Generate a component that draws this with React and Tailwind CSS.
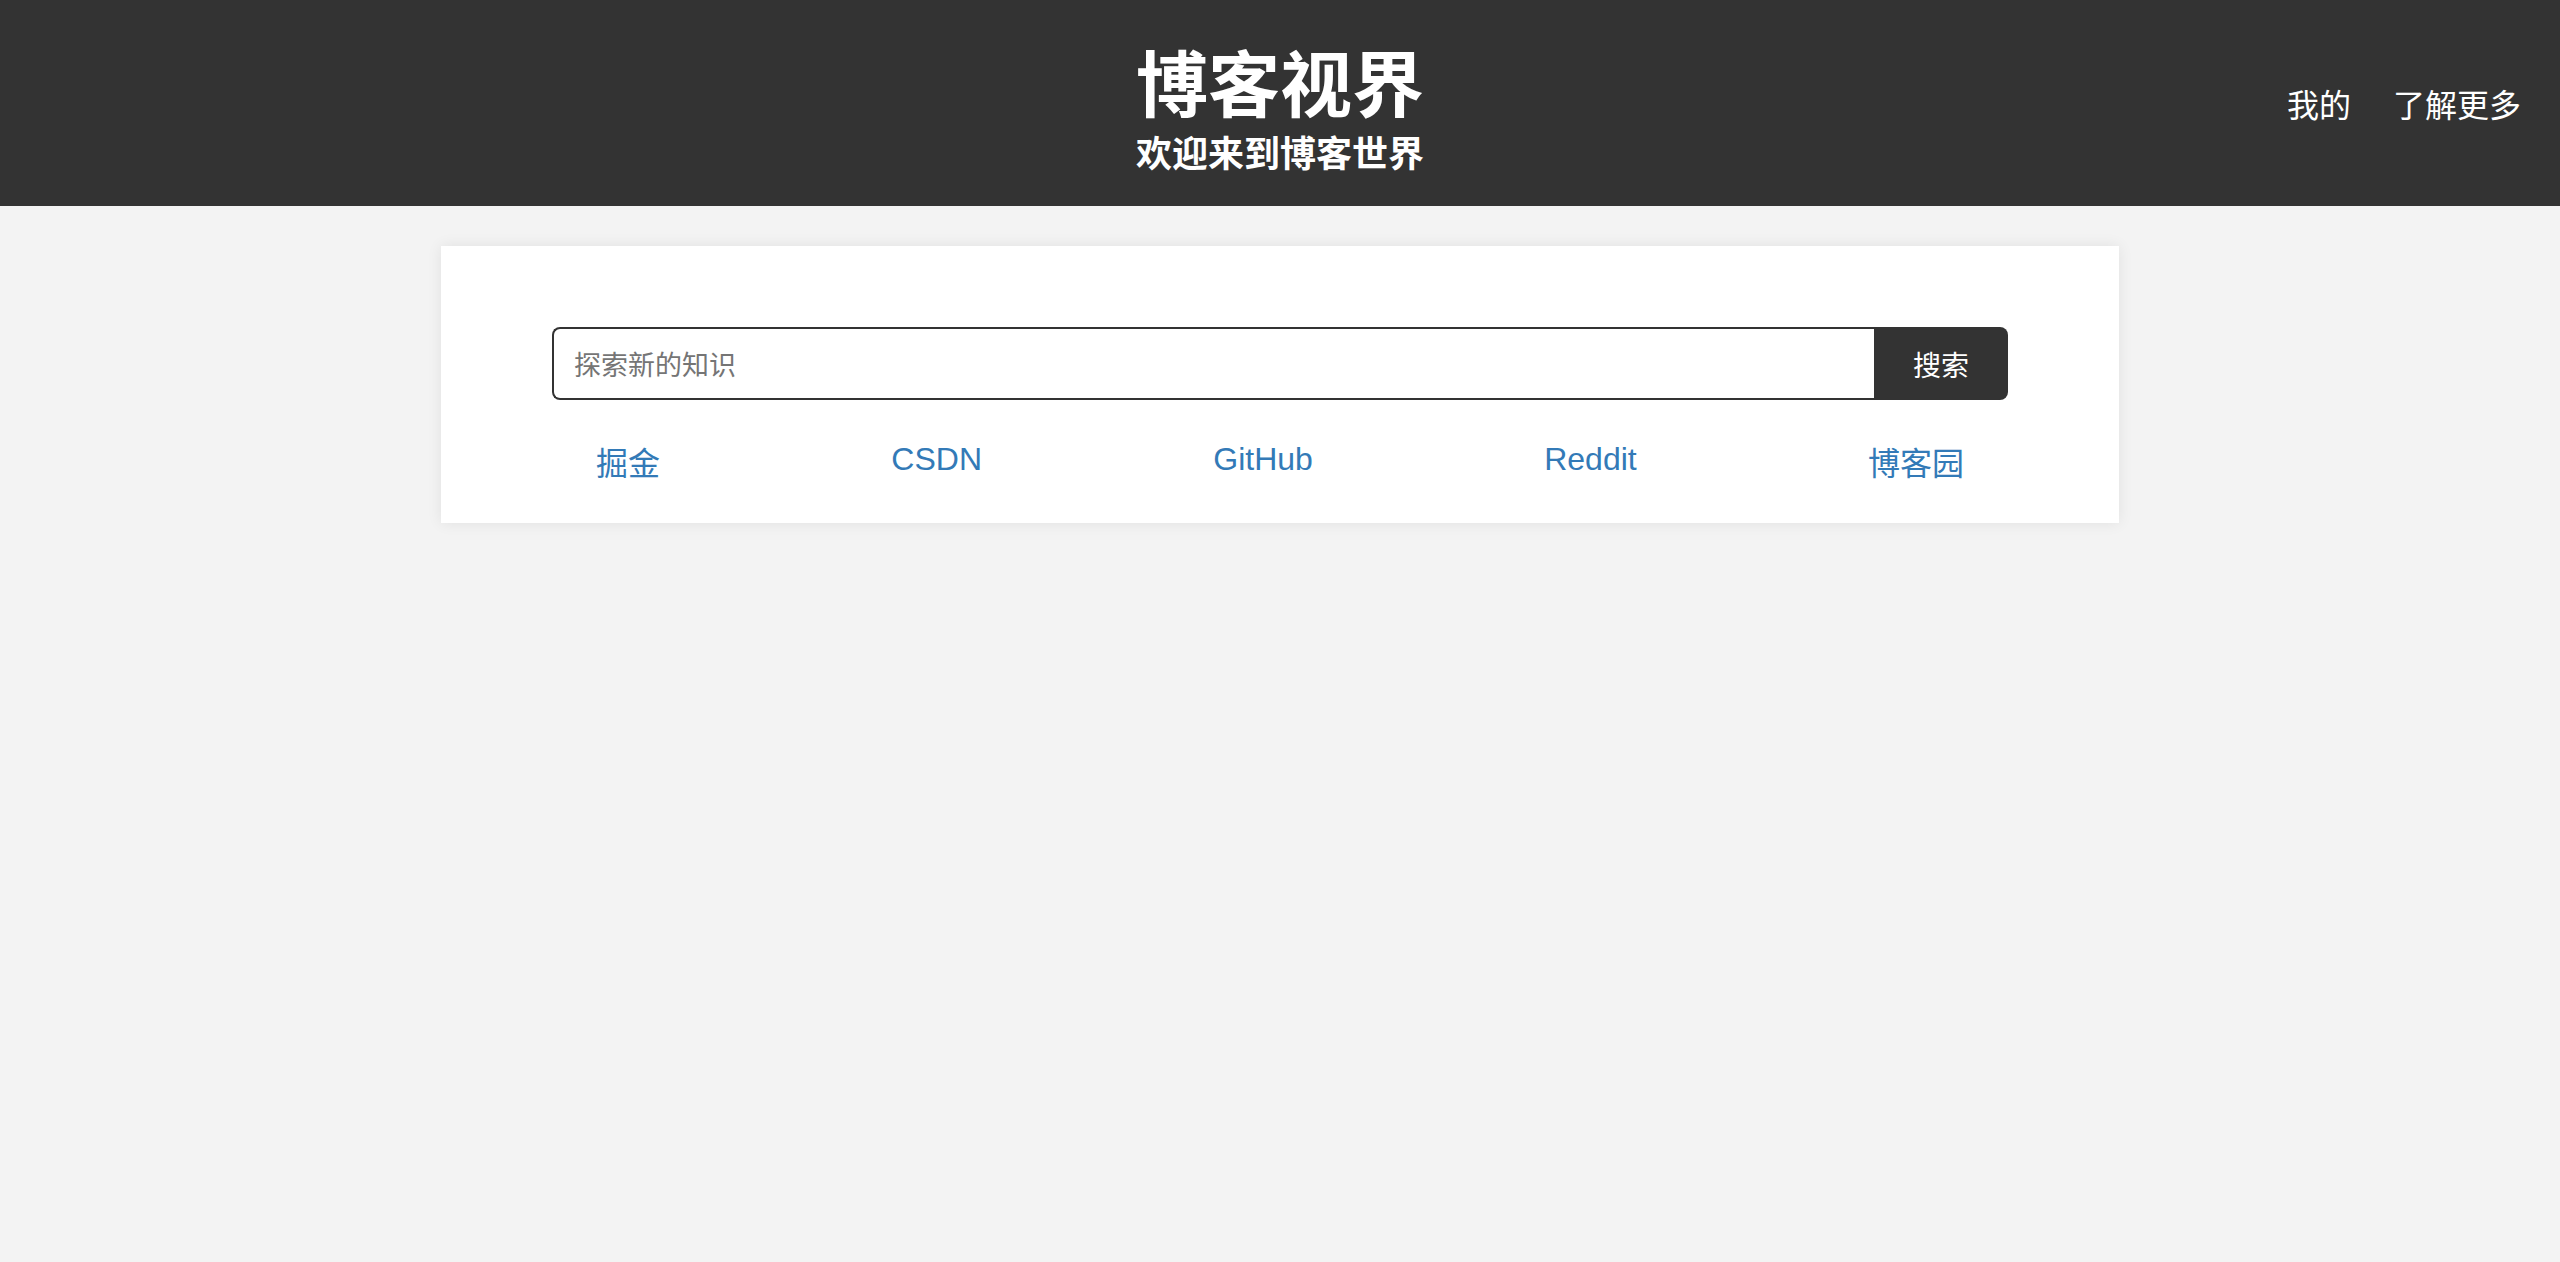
export default function App() {
  const links = [
    { t: "掘金", cjk: true },
    { t: "CSDN" },
    { t: "GitHub" },
    { t: "Reddit" },
    { t: "博客园", cjk: true },
  ];
  return (
    <div className="min-h-[1262px] bg-[#f3f3f3] font-['Liberation_Sans','Noto_Sans_CJK_SC',sans-serif]">
      <header className="h-[206px] bg-[#333333] grid grid-cols-[1fr_auto_1fr] items-center text-white">
        <div />
        <div className="self-start pt-[40px] flex flex-col items-center font-['Noto_Sans_CJK_SC',sans-serif]">
          <h1 className="text-[72px] leading-[80px] font-bold">博客视界</h1>
          <p className="mt-[11px] text-[36px] leading-[40px] font-bold">欢迎来到博客世界</p>
        </div>
        <nav className="flex justify-end gap-[42px] pr-[39px] text-[32px] font-['Noto_Sans_CJK_SC',sans-serif]">
          <a>我的</a>
          <a>了解更多</a>
        </nav>
      </header>
      <main className="pt-[40px]">
        <div className="mx-auto w-[1678px] bg-white shadow-[0_0_14px_rgba(0,0,0,0.08)] px-[111px] pt-[81px] pb-[39px]">
          <div className="flex h-[73px]">
            <input
              className="flex-1 h-full border-2 border-[#333333] border-r-0 rounded-l-[8px] px-[20px] text-[27px] text-[#333] placeholder-[#757575] outline-none font-['Noto_Sans_CJK_SC',sans-serif]"
              placeholder="探索新的知识"
            />
            <button className="w-[134px] h-full bg-[#333333] text-white text-[28px] rounded-r-[8px] font-['Noto_Sans_CJK_SC',sans-serif]">
              搜索
            </button>
          </div>
          <div className="flex justify-between px-[44px] mt-[34px] text-[32px] leading-[50px] text-[#337ab7]">
            {links.map((l) => (
              <a key={l.t} className={l.cjk ? "translate-y-[5px]" : ""}>
                {l.t}
              </a>
            ))}
          </div>
        </div>
      </main>
    </div>
  );
}
